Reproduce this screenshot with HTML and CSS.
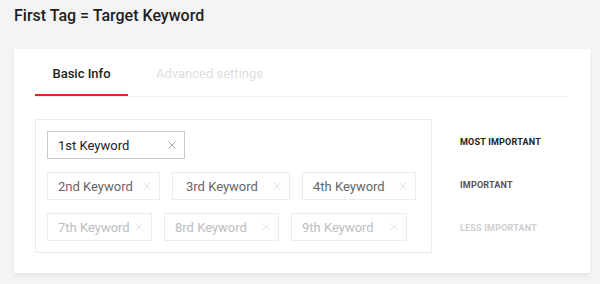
FILE: index.html
```html
<!DOCTYPE html>
<html>
<head>
<meta charset="utf-8">
<link rel="stylesheet" href="styles.css">
</head>
<body>
<h1 class="title">First Tag = Target Keyword</h1>
<div class="card">
  <div class="tabs">
    <div class="tab active">Basic Info</div>
    <div class="tab disabled">Advanced settings</div>
  </div>
  <div class="content">
    <div class="box">
      <div class="row">
        <div class="chip primary w138"><span>1st Keyword</span><svg class="x" viewBox="0 0 8 8"><path d="M0.5 0.5L7.5 7.5M7.5 0.5L0.5 7.5"/></svg></div>
      </div>
      <div class="row">
        <div class="chip secondary w113"><span>2nd Keyword</span><svg class="x" viewBox="0 0 8 8"><path d="M0.5 0.5L7.5 7.5M7.5 0.5L0.5 7.5"/></svg></div>
        <div class="chip secondary w118"><span>3rd Keyword</span><svg class="x" viewBox="0 0 8 8"><path d="M0.5 0.5L7.5 7.5M7.5 0.5L0.5 7.5"/></svg></div>
        <div class="chip secondary w114"><span>4th Keyword</span><svg class="x" viewBox="0 0 8 8"><path d="M0.5 0.5L7.5 7.5M7.5 0.5L0.5 7.5"/></svg></div>
      </div>
      <div class="row">
        <div class="chip tertiary w105"><span>7th Keyword</span><svg class="x" viewBox="0 0 8 8"><path d="M0.5 0.5L7.5 7.5M7.5 0.5L0.5 7.5"/></svg></div>
        <div class="chip tertiary w115"><span>8rd Keyword</span><svg class="x" viewBox="0 0 8 8"><path d="M0.5 0.5L7.5 7.5M7.5 0.5L0.5 7.5"/></svg></div>
        <div class="chip tertiary w116"><span>9th Keyword</span><svg class="x" viewBox="0 0 8 8"><path d="M0.5 0.5L7.5 7.5M7.5 0.5L0.5 7.5"/></svg></div>
      </div>
    </div>
    <div class="labels">
      <div class="label l1">MOST IMPORTANT</div>
      <div class="label l2">IMPORTANT</div>
      <div class="label l3">LESS IMPORTANT</div>
    </div>
  </div>
</div>
</body>
</html>
```

FILE: styles.css
```css
html, body {
  margin: 0;
  padding: 0;
  background: #f4f4f4;
  font-family: Roboto, "Liberation Sans", sans-serif;
}
body {
  width: 600px;
  height: 284px;
  overflow: hidden;
}
.title {
  margin: 0;
  padding: 6px 0 0 14px;
  height: 49px;
  box-sizing: border-box;
  font-size: 16px;
  font-weight: 500;
  color: #1e1e1e;
  line-height: 20px;
}
.card {
  margin-left: 14px;
  width: 576px;
  height: 224px;
  background: #fff;
  box-sizing: border-box;
  padding: 0 22px 0 21px;
  box-shadow: 0 3px 4px rgba(0,0,0,0.06);
}
.tabs {
  display: flex;
  height: 48px;
  border-bottom: 1px solid #eeeeee;
  box-sizing: border-box;
}
.tab {
  display: flex;
  align-items: center;
  justify-content: center;
  white-space: nowrap;
  font-size: 13px;
  font-weight: 500;
  box-sizing: border-box;
  height: 47px;
}
.tab.active {
  width: 93px;
  color: #222;
  border-bottom: 2px solid #e32424;
  padding-top: 3px;
}
.tab.disabled {
  color: #dedede;
  font-weight: 400;
  margin-left: 28px;
  padding-top: 3px;
  padding-bottom: 2px;
}
.content {
  display: flex;
  padding-top: 22px;
}
.box {
  width: 397px;
  height: 134px;
  box-sizing: border-box;
  border: 1px solid #ececec;
  padding: 11px 11px;
  display: flex;
  flex-direction: column;
  gap: 13px;
}
.row {
  display: flex;
  gap: 12px;
}
.chip {
  height: 28px;
  box-sizing: border-box;
  display: flex;
  align-items: center;
  justify-content: space-between;
  padding: 0 8px 0 10px;
  font-size: 13px;
  border: 1px solid #ececec;
}
.chip .x {
  width: 8px;
  height: 8px;
  fill: none;
  stroke-width: 1;
}
.chip.primary {
  border-color: #c9c9c9;
  color: #222;
}
.chip.primary .x { stroke: #a8a8a8; }
.chip.secondary { color: #666; }
.chip.secondary .x { stroke: #e0e0e0; }
.chip.tertiary { color: #bdbdbd; }
.chip.tertiary .x { stroke: #e4e4e4; }
.w138 { width: 138px; }
.w113 { width: 113px; }
.w118 { width: 118px; padding-left: 13px; }
.w114 { width: 114px; }
.w105 { width: 105px; }
.w115 { width: 115px; }
.w116 { width: 116px; }
.labels {
  padding-left: 28px;
  padding-top: 16px;
  display: flex;
  flex-direction: column;
  gap: 29px;
}
.label {
  font-size: 9px;
  font-weight: 700;
  letter-spacing: 0.2px;
  line-height: 14px;
}
.l1 { color: #222; }
.l2 { color: #555; }
.l3 { color: #cfcfcf; }
```
